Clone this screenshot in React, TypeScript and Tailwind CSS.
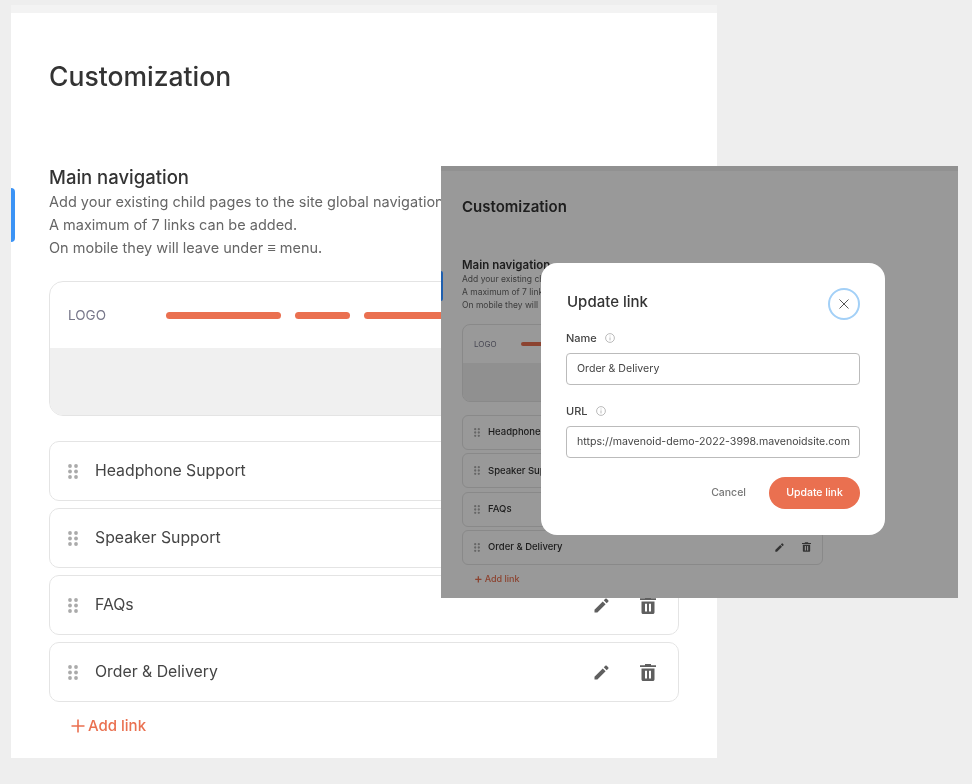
import React from 'react';

const FONT = "font-['Inter','Noto_Sans',sans-serif]";

const links = ['Headphone Support', 'Speaker Support', 'FAQs', 'Order & Delivery'];

const Grip = ({ className }: { className: string }) => (
  <svg viewBox="0 0 10 15" className={className} fill="currentColor">
    <circle cx="2" cy="2" r="1.9" />
    <circle cx="8" cy="2" r="1.9" />
    <circle cx="2" cy="7.5" r="1.9" />
    <circle cx="8" cy="7.5" r="1.9" />
    <circle cx="2" cy="13" r="1.9" />
    <circle cx="8" cy="13" r="1.9" />
  </svg>
);

const Pencil = ({ className }: { className: string }) => (
  <svg viewBox="0 0 16 16" className={className} fill="currentColor">
    <path d="M0.5 12.4V15.5H3.6L12.4 6.7L9.3 3.6L0.5 12.4Z" />
    <path d="M15.2 3.9C15.6 3.5 15.6 2.9 15.2 2.5L13.5 0.8C13.1 0.4 12.5 0.4 12.1 0.8L10.4 2.5L13.5 5.6L15.2 3.9Z" />
  </svg>
);

const Trash = ({ className }: { className: string }) => (
  <svg viewBox="0 0 16 17" className={className} fill="currentColor">
    <path d="M5 0H11V1.2H16V3H0V1.2H5V0Z" />
    <path fillRule="evenodd" d="M1.5 4.5H14.5V15.2C14.5 16.2 13.8 17 12.8 17H3.2C2.2 17 1.5 16.2 1.5 15.2V4.5ZM5 6.8V14.6H7V6.8H5ZM9 6.8V14.6H11V6.8H9Z" />
  </svg>
);

const Info = () => (
  <svg viewBox="0 0 10 10" className="w-[10px] h-[10px] text-[#aaaaaa]" fill="none" stroke="currentColor" strokeWidth="0.8">
    <circle cx="5" cy="5" r="4.4" />
    <path d="M5 4.4V7.4M5 2.6V3.4" />
  </svg>
);

const NavBars = ({ className }: { className: string }) => (
  <div className={className}>
    <div className="h-full w-[115px] rounded-full bg-[#ea7050]" />
    <div className="h-full w-[55px] rounded-full bg-[#ea7050]" />
    <div className="h-full w-[115px] rounded-full bg-[#ea7050]" />
  </div>
);

// the small copy of the page that sits behind the dialog
const MiniPage = () => (
  <div className="h-full bg-white pl-[21px] pt-[32px] text-[#333333] blur-[0.5px]">
    <h2 className="text-[15px] leading-[18px] font-semibold">Customization</h2>
    <h3 className="mt-[42px] text-[11.5px] leading-[14px] font-semibold">Main navigation</h3>
    <div className="w-[79px] overflow-hidden whitespace-nowrap text-[8.5px] leading-[13px] text-[#666666] mt-[1px]">
      <p>Add your existing child pages to the site global navigation.</p>
      <p>A maximum of 7 links can be added.</p>
      <p>On mobile they will leave under ≡ menu.</p>
    </div>
    <div className="mt-[12px] w-[361px] h-[78px] rounded-[8px] border border-[#e4e4e4] overflow-hidden flex flex-col">
      <div className="h-[38px] shrink-0 flex items-center pl-[11px]">
        <span className="text-[8px] text-[#77778a] w-[56px]">LOGO</span>
        <NavBars className="h-[4px] ml-[8px] flex gap-[8px]" />
      </div>
      <div className="flex-1 bg-[#f0f0f0]" />
    </div>
    <div className="mt-[13px] w-[361px] flex flex-col gap-[3.33px]">
      {links.map(l => (
        <div key={l} className="h-[35px] rounded-[6px] border border-[#e4e4e4] flex items-center pl-[11px] pr-[11px]">
          <Grip className="w-[6px] h-[9px] text-[#aaaaaa]" />
          <span className="ml-[8px] text-[9.5px] font-medium flex-1">{l}</span>
          <Pencil className="w-[9px] h-[9px] text-[#555555]" />
          <Trash className="ml-[18px] w-[9px] h-[10px] text-[#555555]" />
        </div>
      ))}
    </div>
    <div className="mt-[7px] ml-[12px] text-[9px] font-medium text-[#ea7050] flex items-center gap-[2px]">
      <span className="text-[13px] leading-[13px]">+</span> Add link
    </div>
  </div>
);

const Field = ({ label, value, className }: { label: string; value: string; className: string }) => (
  <div className={className}>
    <div className="h-[14px] flex items-center gap-[8px] text-[11px] font-medium text-[#444444]">
      {label} <Info />
    </div>
    <div className="mt-[8px] h-[32px] rounded-[4px] border border-[#bbbbbb] flex items-center pl-[10px] text-[10.6px] text-[#444444] whitespace-nowrap overflow-hidden">
      {value}
    </div>
  </div>
);

const UpdateDialog = () => (
  <div className="absolute left-[100px] top-[97px] w-[344px] h-[272px] rounded-[16px] bg-white pl-[25px] pr-[25px] pt-[21px]">
    <div className="blur-[0.3px]">
      <div className="flex justify-between items-start">
        <h2 className="ml-[1px] text-[15px] leading-[36px] font-medium text-[#333333]">Update link</h2>
        <button className="mt-[4px] w-[32px] h-[32px] rounded-full border-2 border-[#a3d0f7] flex items-center justify-center text-[#555555]">
          <svg viewBox="0 0 12 12" className="w-[12px] h-[12px]" fill="none" stroke="currentColor" strokeWidth="1">
            <path d="M1.5 1.5L10.5 10.5M10.5 1.5L1.5 10.5" />
          </svg>
        </button>
      </div>
      <Field label="Name" value="Order & Delivery" className="mt-[11px]" />
      <Field label="URL" value="https://mavenoid-demo-2022-3998.mavenoidsite.com" className="mt-[19px]" />
      <div className="mt-[19px] flex justify-end items-center gap-[23px]">
        <span className="text-[10.5px] font-medium text-[#777777]">Cancel</span>
        <button className="w-[91px] h-[32px] rounded-full bg-[#ea7050] text-white text-[10.5px] font-medium">Update link</button>
      </div>
    </div>
  </div>
);

export default function App() {
  return (
    <div className={`${FONT} relative w-[972px] h-[784px] overflow-hidden bg-[#eeeeee] pl-[11px] pt-[5px]`}>
      <div className="w-[706px] h-[8px] bg-[#f3f3f3]" />
      <div className="relative w-[706px] h-[745px] bg-white pl-[38px] pr-[38px] pt-[46px] text-[#333333]">
        <div className="absolute left-0 top-[175px] w-[4px] h-[54px] rounded-r-[4px] bg-[#3b93f5]" />

        <div className="blur-[0.35px]">
          <h1 className="text-[26.5px] leading-[34px] font-medium">Customization</h1>

          <h2 className="mt-[71px] text-[18.5px] leading-[26px] font-medium">Main navigation</h2>
          <div className="text-[14.5px] leading-[23px] text-[#666666]">
            <p className="whitespace-nowrap">Add your existing child pages to the site global navigation.</p>
            <p>A maximum of 7 links can be added.</p>
            <p>On mobile they will leave under ≡ menu.</p>
          </div>

          <div className="mt-[22px] h-[135px] rounded-[14px] border border-[#e4e4e4] overflow-hidden flex flex-col">
            <div className="h-[66px] shrink-0 flex items-center pl-[18px]">
              <span className="w-[98px] text-[13.5px] text-[#77778a]">LOGO</span>
              <NavBars className="h-[7px] flex gap-[14px]" />
            </div>
            <div className="flex-1 bg-[#f0f0f0]" />
          </div>

          <div className="mt-[25px] flex flex-col gap-[7px]">
            {links.map(l => (
              <div key={l} className="h-[60px] rounded-[10px] border border-[#e4e4e4] flex items-center pl-[18px] pr-[22px]">
                <Grip className="w-[10px] h-[15px] text-[#aaaaaa]" />
                <span className="ml-[17px] flex-1 text-[15.8px] text-[#444444]">{l}</span>
                <Pencil className="w-[15px] h-[15px] text-[#5f5f5f]" />
                <Trash className="ml-[31px] w-[16px] h-[17px] text-[#5f5f5f]" />
              </div>
            ))}
          </div>

          <div className="mt-[13px] ml-[22px] flex items-center gap-[3px] text-[15px] font-medium text-[#ea7050]">
            <svg viewBox="0 0 14 14" className="w-[14px] h-[14px]" fill="none" stroke="currentColor" strokeWidth="1.6">
              <path d="M7 0.5V13.5M0.5 7H13.5" />
            </svg>
            Add link
          </div>
        </div>
      </div>

      {/* screenshot of the dialog laid over the page */}
      <div className="absolute left-[441px] top-[166px] w-[517px] h-[432px] overflow-hidden">
        <MiniPage />
        <div className="absolute inset-0 bg-black/40" />
        <div className="absolute left-0 top-0 w-full h-[5px] bg-black/5" />
        <div className="absolute left-0 top-[105px] w-[2px] h-[30px] rounded-r-[2px] bg-[#1f5fae]" />
        <UpdateDialog />
      </div>
    </div>
  );
}
